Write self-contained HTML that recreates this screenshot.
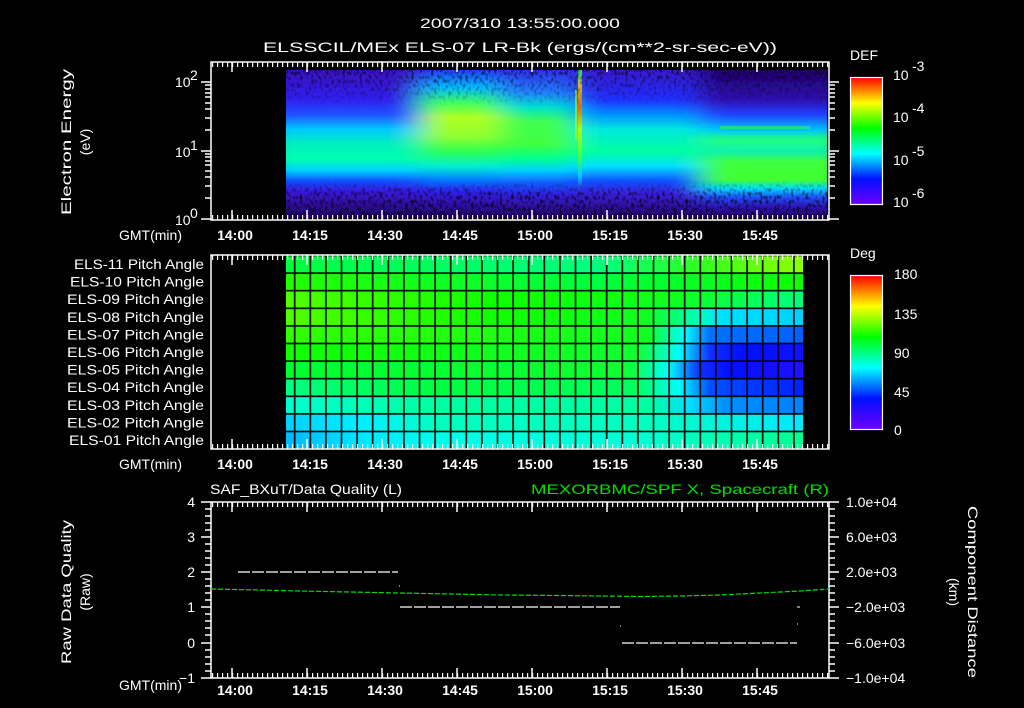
<!DOCTYPE html>
<html><head><meta charset="utf-8"><style>
html,body{margin:0;padding:0;background:#000;}
svg{display:block}
text{font-family:"Liberation Sans",sans-serif;fill:#fff;font-size:14px}
</style></head><body>
<svg width="1024" height="708" viewBox="0 0 1024 708" xmlns="http://www.w3.org/2000/svg">
<defs>
<linearGradient id="gA" x1="0" y1="70" x2="0" y2="218" gradientUnits="userSpaceOnUse">
<stop offset="0" stop-color="#3a10c0"/><stop offset=".2" stop-color="#3020f0"/><stop offset=".3" stop-color="#2050ff"/><stop offset=".4" stop-color="#00c8ff"/><stop offset=".5" stop-color="#00f0c0"/><stop offset=".6" stop-color="#00ffb0"/><stop offset=".68" stop-color="#00d0ff"/><stop offset=".75" stop-color="#1050ff"/><stop offset=".82" stop-color="#3a18e0"/><stop offset=".9" stop-color="#3010a0"/><stop offset="1" stop-color="#200060"/></linearGradient>
<linearGradient id="gB" x1="0" y1="70" x2="0" y2="218" gradientUnits="userSpaceOnUse">
<stop offset="0" stop-color="#2040ff"/><stop offset=".12" stop-color="#00c0ff"/><stop offset=".22" stop-color="#40ff60"/><stop offset=".32" stop-color="#b0ff20"/><stop offset=".45" stop-color="#90ff30"/><stop offset=".55" stop-color="#30ff50"/><stop offset=".65" stop-color="#00f0d0"/><stop offset=".74" stop-color="#0080ff"/><stop offset=".82" stop-color="#3020f0"/><stop offset=".9" stop-color="#3010b0"/><stop offset="1" stop-color="#200060"/></linearGradient>
<linearGradient id="gC" x1="0" y1="70" x2="0" y2="218" gradientUnits="userSpaceOnUse">
<stop offset="0" stop-color="#3030f0"/><stop offset=".15" stop-color="#2080ff"/><stop offset=".25" stop-color="#00e0d0"/><stop offset=".35" stop-color="#40ff50"/><stop offset=".5" stop-color="#40ff40"/><stop offset=".6" stop-color="#00ff90"/><stop offset=".68" stop-color="#00d0ff"/><stop offset=".76" stop-color="#1060ff"/><stop offset=".84" stop-color="#3020e0"/><stop offset=".92" stop-color="#3010a0"/><stop offset="1" stop-color="#200060"/></linearGradient>
<linearGradient id="gE" x1="0" y1="70" x2="0" y2="218" gradientUnits="userSpaceOnUse">
<stop offset="0" stop-color="#3a18d0"/><stop offset=".2" stop-color="#2030ff"/><stop offset=".3" stop-color="#0090ff"/><stop offset=".4" stop-color="#00e8e0"/><stop offset=".55" stop-color="#00ffa0"/><stop offset=".65" stop-color="#00e0ff"/><stop offset=".75" stop-color="#1050ff"/><stop offset=".83" stop-color="#3a20e0"/><stop offset=".92" stop-color="#3010a0"/><stop offset="1" stop-color="#200060"/></linearGradient>
<linearGradient id="gF" x1="0" y1="70" x2="0" y2="218" gradientUnits="userSpaceOnUse">
<stop offset="0" stop-color="#200070"/><stop offset=".2" stop-color="#3010b0"/><stop offset=".3" stop-color="#2040ff"/><stop offset=".4" stop-color="#00c0ff"/><stop offset=".47" stop-color="#20ff80"/><stop offset=".55" stop-color="#10f0b0"/><stop offset=".62" stop-color="#40ff40"/><stop offset=".74" stop-color="#40ff30"/><stop offset=".8" stop-color="#00e0ff"/><stop offset=".86" stop-color="#2050ff"/><stop offset=".93" stop-color="#3010b0"/><stop offset="1" stop-color="#200060"/></linearGradient>
<linearGradient id="gS" x1="0" y1="70" x2="0" y2="218" gradientUnits="userSpaceOnUse">
<stop offset="0" stop-color="#00ff80"/><stop offset=".1" stop-color="#ffd000"/><stop offset=".25" stop-color="#ff6000"/><stop offset=".4" stop-color="#c0ff00"/><stop offset=".6" stop-color="#40ff40"/><stop offset=".72" stop-color="#00d0ff"/><stop offset=".82" stop-color="#3020e0"/><stop offset="1" stop-color="#200060"/></linearGradient>
<linearGradient id="cbar" x1="0" y1="1" x2="0" y2="0">
<stop offset="0" stop-color="#7000ff"/><stop offset=".2" stop-color="#0010ff"/><stop offset=".4" stop-color="#00ffff"/><stop offset=".6" stop-color="#00ff00"/><stop offset=".8" stop-color="#ffff00"/><stop offset=".9" stop-color="#ff8000"/><stop offset="1" stop-color="#ff0000"/></linearGradient>
<pattern id="tkT" x="232" y="0" width="5" height="708" patternUnits="userSpaceOnUse"><rect x="0" y="0" width="1.2" height="708" fill="#fff"/></pattern>
<pattern id="grid" x="294.7" y="255.5" width="15.6" height="17.6" patternUnits="userSpaceOnUse"><rect x="0" y="0" width="15.6" height="17.6" fill="none" stroke="#000" stroke-width="1.6"/></pattern>
<filter id="noise" x="0" y="0" width="1" height="1"><feTurbulence type="fractalNoise" baseFrequency="0.35 0.25" numOctaves="1" seed="3"/><feColorMatrix type="matrix" values="0 0 0 0 0  0 0 0 0 0  0 0 0 0 0  0 0 0 -3 1.6"/></filter>
<filter id="hb" x="-0.05" y="0" width="1.1" height="1"><feGaussianBlur stdDeviation="14 0"/></filter>
<clipPath id="dclip"><rect x="286" y="70" width="541" height="148"/></clipPath>
<linearGradient id="nmask" x1="0" y1="70" x2="0" y2="218" gradientUnits="userSpaceOnUse"><stop offset="0" stop-color="#fff"/><stop offset=".25" stop-color="#000"/><stop offset=".75" stop-color="#000"/><stop offset=".85" stop-color="#fff"/><stop offset="1" stop-color="#fff"/></linearGradient>
<mask id="nm"><rect x="286" y="70" width="541" height="148" fill="url(#nmask)"/></mask>
</defs>

<!-- titles -->
<text x="520" y="28" text-anchor="middle" font-size="16" textLength="200" lengthAdjust="spacingAndGlyphs">2007/310 13:55:00.000</text>
<text x="520" y="52" text-anchor="middle" font-size="16" textLength="514" lengthAdjust="spacingAndGlyphs">ELSSCIL/MEx ELS-07 LR-Bk  (ergs/(cm**2-sr-sec-eV))</text>

<!-- TOP PANEL -->
<g clip-path="url(#dclip)">
<g filter="url(#hb)">
<rect x="260" y="70" width="160" height="148" fill="url(#gA)"/>
<rect x="420" y="70" width="80" height="148" fill="url(#gB)"/>
<rect x="500" y="70" width="75" height="148" fill="url(#gC)"/>
<rect x="575" y="70" width="125" height="148" fill="url(#gE)"/>
<rect x="700" y="70" width="150" height="148" fill="url(#gF)"/>
</g>
<rect x="578" y="70" width="4" height="148" fill="url(#gS)" opacity=".85"/>
<rect x="575" y="90" width="2" height="50" fill="#c0ff00" opacity=".6"/>
<rect x="720" y="126" width="90" height="3" fill="#40ff30" opacity=".5"/>
<rect x="286" y="70" width="541" height="148" fill="#000" filter="url(#noise)" mask="url(#nm)" opacity=".8"/>
</g>
<rect x="211" y="62" width="618" height="158" fill="none" stroke="#fff" stroke-width="1.5"/>
<rect x="211" y="62" width="618" height="5" fill="url(#tkT)"/>
<rect x="211" y="215" width="618" height="5" fill="url(#tkT)"/>
<g stroke="#fff" stroke-width="1.5">
<path d="M232 62v10M307 62v10M382 62v10M457 62v10M532 62v10M607 62v10M682 62v10M757 62v10M232 220v-10M307 220v-10M382 220v-10M457 220v-10M532 220v-10M607 220v-10M682 220v-10M757 220v-10"/>
<path d="M201 82h10M201 151h10M201 219h10M205 198h6M205 186h6M205 177h6M205 171h6M205 165h6M205 161h6M205 157h6M205 154h6M205 130h6M205 118h6M205 109h6M205 103h6M205 97h6M205 93h6M205 89h6M205 85h6"/>
<path d="M829 82h10M829 151h10M829 219h10M829 198h6M829 186h6M829 177h6M829 171h6M829 165h6M829 161h6M829 157h6M829 154h6M829 130h6M829 118h6M829 109h6M829 103h6M829 97h6M829 93h6M829 89h6M829 85h6"/>
</g>
<text x="175" y="87" font-size="14">10</text><text x="190" y="80" font-size="9">2</text>
<text x="175" y="157" font-size="14">10</text><text x="190" y="150" font-size="9">1</text>
<text x="175" y="225" font-size="14">10</text><text x="190" y="218" font-size="9">0</text>
<text transform="translate(71,142) rotate(-90)" text-anchor="middle" font-size="15" textLength="146" lengthAdjust="spacingAndGlyphs">Electron Energy</text>
<text transform="translate(90,142) rotate(-90)" text-anchor="middle" font-size="15">(eV)</text>
<text x="182" y="240" text-anchor="end" font-size="14">GMT(min)</text>
<g font-size="14" font-weight="bold" text-anchor="middle">
<text x="235" y="240">14:00</text><text x="310" y="240">14:15</text><text x="385" y="240">14:30</text><text x="460" y="240">14:45</text><text x="535" y="240">15:00</text><text x="610" y="240">15:15</text><text x="685" y="240">15:30</text><text x="760" y="240">15:45</text>
</g>
<text x="850" y="60" font-size="16">DEF</text>
<rect x="850.5" y="77.5" width="32" height="127" fill="url(#cbar)" stroke="#fff" stroke-width="1.2"/>
<g font-size="16"><text x="893" y="80">10</text><text x="912" y="71" font-size="10">-3</text>
<text x="893" y="122">10</text><text x="912" y="113" font-size="10">-4</text>
<text x="893" y="165">10</text><text x="912" y="156" font-size="10">-5</text>
<text x="893" y="207">10</text><text x="912" y="198" font-size="10">-6</text></g>

<!-- MIDDLE PANEL -->
<g>
<defs>
<linearGradient id="r1" x1="286" x2="803" gradientUnits="userSpaceOnUse"><stop offset="0" stop-color="#00ff40"/><stop offset=".6" stop-color="#00ff80"/><stop offset=".8" stop-color="#30ff20"/><stop offset="1" stop-color="#90ff00"/></linearGradient>
<linearGradient id="r2" x1="286" x2="803" gradientUnits="userSpaceOnUse"><stop offset="0" stop-color="#20ff00"/><stop offset=".6" stop-color="#00ff40"/><stop offset="1" stop-color="#10ff00"/></linearGradient>
<linearGradient id="r3" x1="286" x2="803" gradientUnits="userSpaceOnUse"><stop offset="0" stop-color="#50ff00"/><stop offset=".4" stop-color="#10ff00"/><stop offset=".75" stop-color="#10ff20"/><stop offset="1" stop-color="#00ff80"/></linearGradient>
<linearGradient id="r4" x1="286" x2="803" gradientUnits="userSpaceOnUse"><stop offset="0" stop-color="#50ff00"/><stop offset=".4" stop-color="#10ff00"/><stop offset=".7" stop-color="#10ff20"/><stop offset=".8" stop-color="#00ffc0"/><stop offset=".84" stop-color="#00e0ff"/><stop offset="1" stop-color="#00d0ff"/></linearGradient>
<linearGradient id="r5" x1="286" x2="803" gradientUnits="userSpaceOnUse"><stop offset="0" stop-color="#30ff00"/><stop offset=".7" stop-color="#10ff20"/><stop offset=".77" stop-color="#00ffff"/><stop offset=".82" stop-color="#0070ff"/><stop offset="1" stop-color="#0060ff"/></linearGradient>
<linearGradient id="r6" x1="286" x2="803" gradientUnits="userSpaceOnUse"><stop offset="0" stop-color="#10ff00"/><stop offset=".68" stop-color="#10ff30"/><stop offset=".76" stop-color="#00ffff"/><stop offset=".82" stop-color="#1030ff"/><stop offset=".88" stop-color="#0010ff"/><stop offset="1" stop-color="#1010ff"/></linearGradient>
<linearGradient id="r7" x1="286" x2="803" gradientUnits="userSpaceOnUse"><stop offset="0" stop-color="#00ff30"/><stop offset=".66" stop-color="#10ff30"/><stop offset=".74" stop-color="#00ffff"/><stop offset=".8" stop-color="#1030ff"/><stop offset=".86" stop-color="#0010ff"/><stop offset="1" stop-color="#2010ff"/></linearGradient>
<linearGradient id="r8" x1="286" x2="803" gradientUnits="userSpaceOnUse"><stop offset="0" stop-color="#00ff80"/><stop offset=".3" stop-color="#00ff40"/><stop offset=".68" stop-color="#00ff60"/><stop offset=".76" stop-color="#00ffff"/><stop offset=".82" stop-color="#0050ff"/><stop offset="1" stop-color="#0020ff"/></linearGradient>
<linearGradient id="r9" x1="286" x2="803" gradientUnits="userSpaceOnUse"><stop offset="0" stop-color="#00ffd0"/><stop offset=".3" stop-color="#00ffa0"/><stop offset=".7" stop-color="#00ffa0"/><stop offset=".78" stop-color="#00e0ff"/><stop offset=".85" stop-color="#0090ff"/><stop offset="1" stop-color="#0080ff"/></linearGradient>
<linearGradient id="r10" x1="286" x2="803" gradientUnits="userSpaceOnUse"><stop offset="0" stop-color="#00d0ff"/><stop offset=".15" stop-color="#00f0ff"/><stop offset=".3" stop-color="#00ffc0"/><stop offset=".7" stop-color="#00ffc0"/><stop offset="1" stop-color="#00e8ff"/></linearGradient>
<linearGradient id="r11" x1="286" x2="803" gradientUnits="userSpaceOnUse"><stop offset="0" stop-color="#00b8ff"/><stop offset=".15" stop-color="#00e8ff"/><stop offset=".3" stop-color="#00ffe8"/><stop offset=".7" stop-color="#00ffd0"/><stop offset="1" stop-color="#00ff90"/></linearGradient>
</defs>
<rect x="286" y="255.5" width="517" height="17.6" fill="url(#r1)"/>
<rect x="286" y="273.1" width="517" height="17.6" fill="url(#r2)"/>
<rect x="286" y="290.7" width="517" height="17.6" fill="url(#r3)"/>
<rect x="286" y="308.3" width="517" height="17.6" fill="url(#r4)"/>
<rect x="286" y="325.9" width="517" height="17.6" fill="url(#r5)"/>
<rect x="286" y="343.5" width="517" height="17.6" fill="url(#r6)"/>
<rect x="286" y="361.1" width="517" height="17.6" fill="url(#r7)"/>
<rect x="286" y="378.7" width="517" height="17.6" fill="url(#r8)"/>
<rect x="286" y="396.3" width="517" height="17.6" fill="url(#r9)"/>
<rect x="286" y="413.9" width="517" height="17.6" fill="url(#r10)"/>
<rect x="286" y="431.5" width="517" height="17.6" fill="url(#r11)"/>
<rect x="286" y="255.5" width="517" height="193.6" fill="url(#grid)"/>
</g>
<rect x="211" y="255" width="618" height="194" fill="none" stroke="#fff" stroke-width="1.5"/>
<rect x="211" y="255" width="618" height="5" fill="url(#tkT)"/>
<rect x="211" y="444" width="618" height="5" fill="url(#tkT)"/>
<path stroke="#fff" stroke-width="1.5" d="M232 255v10M307 255v10M382 255v10M457 255v10M532 255v10M607 255v10M682 255v10M757 255v10M232 449v-10M307 449v-10M382 449v-10M457 449v-10M532 449v-10M607 449v-10M682 449v-10M757 449v-10"/>
<g font-size="13.5" text-anchor="end">
<text x="204" y="269" textLength="130" lengthAdjust="spacingAndGlyphs">ELS-11 Pitch Angle</text>
<text x="204" y="286.6" textLength="134" lengthAdjust="spacingAndGlyphs">ELS-10 Pitch Angle</text>
<text x="204" y="304.2" textLength="137" lengthAdjust="spacingAndGlyphs">ELS-09 Pitch Angle</text>
<text x="204" y="321.8" textLength="137" lengthAdjust="spacingAndGlyphs">ELS-08 Pitch Angle</text>
<text x="204" y="339.4" textLength="137" lengthAdjust="spacingAndGlyphs">ELS-07 Pitch Angle</text>
<text x="204" y="357" textLength="137" lengthAdjust="spacingAndGlyphs">ELS-06 Pitch Angle</text>
<text x="204" y="374.6" textLength="137" lengthAdjust="spacingAndGlyphs">ELS-05 Pitch Angle</text>
<text x="204" y="392.2" textLength="137" lengthAdjust="spacingAndGlyphs">ELS-04 Pitch Angle</text>
<text x="204" y="409.8" textLength="137" lengthAdjust="spacingAndGlyphs">ELS-03 Pitch Angle</text>
<text x="204" y="427.4" textLength="137" lengthAdjust="spacingAndGlyphs">ELS-02 Pitch Angle</text>
<text x="204" y="445" textLength="135" lengthAdjust="spacingAndGlyphs">ELS-01 Pitch Angle</text>
</g>
<text x="182" y="469" text-anchor="end">GMT(min)</text>
<g font-size="14" font-weight="bold" text-anchor="middle">
<text x="235" y="469">14:00</text><text x="310" y="469">14:15</text><text x="385" y="469">14:30</text><text x="460" y="469">14:45</text><text x="535" y="469">15:00</text><text x="610" y="469">15:15</text><text x="685" y="469">15:30</text><text x="760" y="469">15:45</text>
</g>
<text x="850" y="258" font-size="16">Deg</text>
<rect x="850.5" y="275.5" width="32" height="154" fill="url(#cbar)" stroke="#fff" stroke-width="1.2"/>
<g font-size="16"><text x="894" y="279">180</text><text x="894" y="319">135</text><text x="894" y="358">90</text><text x="894" y="397">45</text><text x="894" y="435">0</text></g>

<!-- BOTTOM PANEL -->
<text x="210" y="494" font-size="15" textLength="192" lengthAdjust="spacingAndGlyphs">SAF_BXuT/Data Quality (L)</text>
<text x="829" y="494" font-size="15" text-anchor="end" textLength="298" lengthAdjust="spacingAndGlyphs" style="fill:#00e000">MEXORBMC/SPF X, Spacecraft (R)</text>
<rect x="211" y="502" width="618" height="176" fill="none" stroke="#fff" stroke-width="1.5"/>
<rect x="211" y="502" width="618" height="5" fill="url(#tkT)"/>
<rect x="211" y="673" width="618" height="5" fill="url(#tkT)"/>
<path stroke="#fff" stroke-width="1.5" d="M232 502v10M307 502v10M382 502v10M457 502v10M532 502v10M607 502v10M682 502v10M757 502v10M232 678v-10M307 678v-10M382 678v-10M457 678v-10M532 678v-10M607 678v-10M682 678v-10M757 678v-10
M201 502h10M201 537h10M201 572h10M201 607h10M201 643h10M201 678h10
M205 509h6M205 516h6M205 523h6M205 530h6M205 544h6M205 551h6M205 558h6M205 565h6M205 579h6M205 586h6M205 593h6M205 600h6M205 614h6M205 621h6M205 628h6M205 635h6M205 650h6M205 657h6M205 664h6M205 671h6
M829 502h10M829 537h10M829 572h10M829 607h10M829 643h10M829 678h10
M829 509h6M829 516h6M829 523h6M829 530h6M829 544h6M829 551h6M829 558h6M829 565h6M829 579h6M829 586h6M829 593h6M829 600h6M829 614h6M829 621h6M829 628h6M829 635h6M829 650h6M829 657h6M829 664h6M829 671h6"/>
<g text-anchor="end" font-size="15"><text x="195" y="507">4</text><text x="195" y="542">3</text><text x="195" y="577">2</text><text x="195" y="612">1</text><text x="195" y="648">0</text><text x="195" y="683">−1</text></g>
<g font-size="14"><text x="846" y="507">1.0e+04</text><text x="846" y="542">6.0e+03</text><text x="846" y="577">2.0e+03</text><text x="846" y="612">−2.0e+03</text><text x="846" y="648">−6.0e+03</text><text x="846" y="683">−1.0e+04</text></g>
<text transform="translate(71,592) rotate(-90)" text-anchor="middle" font-size="15" textLength="144" lengthAdjust="spacingAndGlyphs">Raw Data Quality</text>
<text transform="translate(90,592) rotate(-90)" text-anchor="middle" font-size="15">(Raw)</text>
<text transform="translate(968,592) rotate(90)" text-anchor="middle" font-size="15" textLength="172" lengthAdjust="spacingAndGlyphs">Component Distance</text>
<text transform="translate(949,592) rotate(90)" text-anchor="middle" font-size="15">(km)</text>
<g stroke="#fff" stroke-width="1.3" stroke-dasharray="12 2">
<path d="M238 572H398M400 607H620M622 643H797"/>
</g>
<path d="M797 607h3M399 586h1M620 626h1M797 624h1" stroke="#fff" stroke-width="1"/>
<path d="M211 589 L260 590 L300 591 L350 592 L400 593 L450 594 L500 595 L560 595.5 L600 596 L640 596.5 L680 596 L720 595 L760 593 L800 591 L829 589" fill="none" stroke="#00e000" stroke-width="1.2" stroke-dasharray="5 2"/>
<text x="182" y="690" text-anchor="end">GMT(min)</text>
<g font-size="14" font-weight="bold" text-anchor="middle">
<text x="235" y="695">14:00</text><text x="310" y="695">14:15</text><text x="385" y="695">14:30</text><text x="460" y="695">14:45</text><text x="535" y="695">15:00</text><text x="610" y="695">15:15</text><text x="685" y="695">15:30</text><text x="760" y="695">15:45</text>
</g>
</svg>
</body></html>
